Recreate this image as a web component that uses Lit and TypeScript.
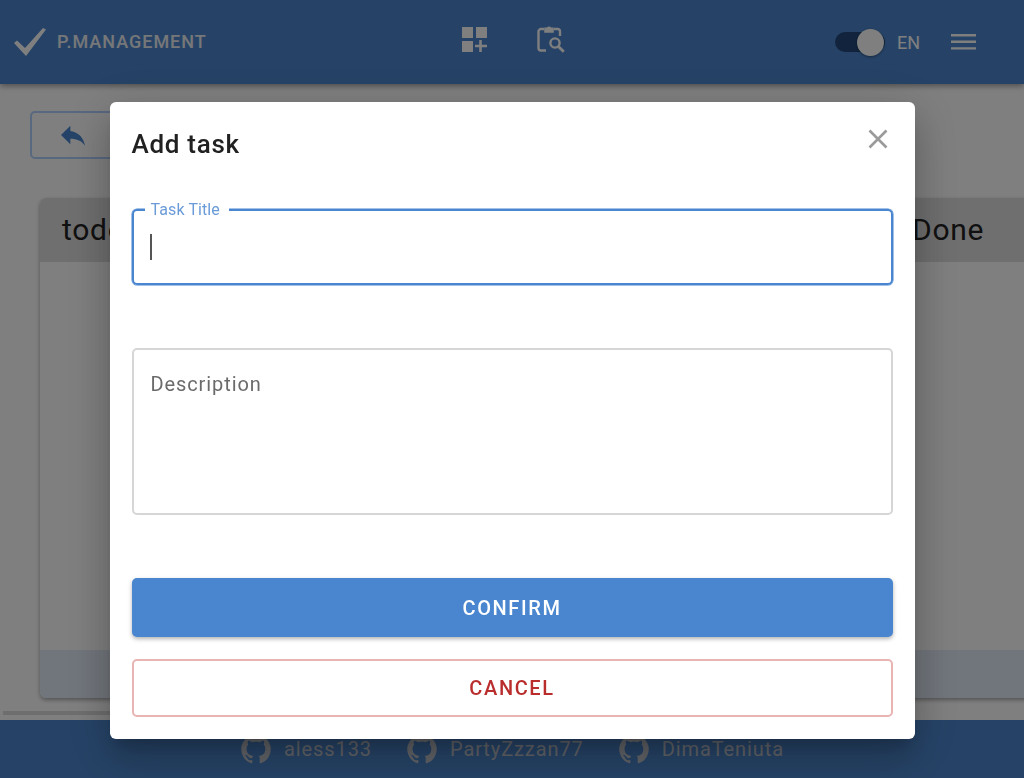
import { LitElement, html, css } from 'lit';
import { customElement } from 'lit/decorators.js';

const githubPath =
  'M12 1.27a11 11 0 00-3.48 21.46c.55.09.73-.28.73-.55v-1.84c-3.03.64-3.67-1.46-3.67-1.46-.55-1.29-1.28-1.65-1.28-1.65-.92-.65.1-.65.1-.65 1.1 0 1.73 1.1 1.73 1.1.92 1.65 2.57 1.2 3.21.92a2 2 0 01.64-1.47c-2.47-.27-5.04-1.19-5.04-5.5 0-1.1.46-2.1 1.2-2.84a3.76 3.76 0 010-2.93s.91-.28 3.11 1.1c1.8-.49 3.7-.49 5.5 0 2.1-1.38 3.02-1.1 3.02-1.1a3.76 3.76 0 010 2.93c.83.74 1.2 1.74 1.2 2.94 0 4.21-2.57 5.13-5.04 5.4.45.37.82.92.82 2.02v3.03c0 .27.1.64.73.55A11 11 0 0012 1.27';

const authors = ['aless133', 'PartyZzzan77', 'DimaTeniuta'];

@customElement('app-root')
export class AppRoot extends LitElement {
  static styles = css`
    :host {
      display: block;
      height: 778px;
      overflow: hidden;
      font-family: Roboto, 'Liberation Sans', sans-serif;
    }

    * {
      box-sizing: border-box;
    }

    .page {
      display: flex;
      flex-direction: column;
      height: 778px;
      background: #fff;
    }

    /* Header */
    .header {
      flex: none;
      display: grid;
      grid-template-columns: 1fr auto 1fr;
      align-items: center;
      height: 84px;
      padding: 0 14px;
      background: #4c87cf;
      color: #fff;
      box-shadow: 0 2px 6px rgba(0, 0, 0, 0.4);
      position: relative;
    }

    .logo {
      display: flex;
      align-items: center;
      gap: 11px;
      color: #eceef2;
      font-size: 18px;
      font-weight: 500;
      letter-spacing: 1px;
    }

    .logo span {
      padding-bottom: 2px;
    }

    .nav {
      display: flex;
      align-items: center;
      gap: 50px;
      margin: -6px 0 0 2px;
    }

    .nav svg {
      display: block;
    }

    .controls {
      display: flex;
      justify-content: flex-end;
      align-items: center;
      padding-right: 34px;
      font-size: 18px;
      font-weight: 400;
    }

    .switch {
      display: flex;
      align-items: center;
      width: 50px;
      height: 20px;
      margin-right: 12px;
      padding-left: 22px;
      border-radius: 10px;
      background: #24497a;
    }

    .thumb {
      flex: none;
      width: 27px;
      height: 27px;
      border-radius: 50%;
      background: #fff;
      box-shadow: 0 1px 3px rgba(0, 0, 0, 0.4);
    }

    .menu {
      display: block;
      margin-left: 31px;
    }

    /* Board */
    .main {
      flex: 1;
      min-height: 0;
      overflow: hidden;
      padding: 27px 0 0;
    }

    .back {
      display: flex;
      align-items: center;
      justify-content: center;
      width: 85px;
      height: 48px;
      margin-left: 30px;
      border: 2px solid #b0d0ff;
      border-radius: 5px;
      background: transparent;
    }

    .board {
      display: flex;
      gap: 450px;
      height: 500px;
      margin: 39px 0 0 40px;
    }

    .column {
      flex: none;
      display: flex;
      flex-direction: column;
      width: 400px;
      border-radius: 6px;
      background: #fff;
      box-shadow: 0 2px 4px rgba(0, 0, 0, 0.35);
      overflow: hidden;
    }

    .column-title {
      flex: none;
      height: 64px;
      padding: 0 22px;
      background: #dedede;
      color: #222;
      font-size: 30px;
      letter-spacing: 0.7px;
      line-height: 64px;
    }

    .column-body {
      flex: 1;
    }

    .column-foot {
      flex: none;
      height: 48px;
      background: #e3ecf8;
    }

    .scrollbar {
      width: 600px;
      height: 4px;
      margin: 13px 0 0 3px;
      background: #dcdcdc;
    }

    /* Footer */
    .footer {
      flex: none;
      display: flex;
      justify-content: center;
      align-items: center;
      gap: 34px;
      height: 58px;
      background: #4c87cf;
      color: #c4c8d0;
      font-size: 20px;
      letter-spacing: 0.9px;
    }

    .author {
      display: flex;
      align-items: center;
      gap: 12px;
    }

    .author svg {
      display: block;
      fill: currentColor;
    }

    /* Dialog */
    .backdrop {
      position: fixed;
      inset: 0;
      display: flex;
      justify-content: center;
      align-items: flex-start;
      padding-top: 102px;
      background: rgba(0, 0, 0, 0.5);
    }

    .dialog {
      display: flex;
      flex-direction: column;
      width: 805px;
      height: 637px;
      padding: 0 22px;
      border-radius: 6px;
      background: #fff;
      box-shadow: 0 11px 15px -7px rgba(0, 0, 0, 0.2), 0 24px 38px 3px rgba(0, 0, 0, 0.14),
        0 9px 46px 8px rgba(0, 0, 0, 0.12);
    }

    .dialog-head {
      flex: none;
      display: flex;
      justify-content: space-between;
      align-items: center;
      height: 84px;
      padding-right: 5px;
    }

    .dialog-head h2 {
      margin: 0;
      color: #212121;
      font-size: 26px;
      font-weight: 500;
      letter-spacing: 0.7px;
      line-height: 84px;
    }

    .close {
      display: block;
      margin-top: -10px;
      padding: 0;
      border: none;
      background: none;
    }

    .close svg {
      display: block;
    }

    .field {
      position: relative;
      flex: none;
      display: flex;
      border: 2px solid #d6d6d6;
      border-radius: 5px;
    }

    .field.title {
      height: 76px;
      margin: 23px 0 63px;
      border-color: #4a86cf;
      box-shadow: 0 0 0 0.5px #4a86cf;
    }

    .field.description {
      height: 167px;
    }

    .field label {
      position: absolute;
      top: -10px;
      left: 11px;
      padding: 0 9px 0 6px;
      background: #fff;
      color: #6a9bd8;
      font-size: 16px;
      letter-spacing: 0.1px;
      line-height: 18px;
    }

    .caret {
      position: absolute;
      top: 23px;
      left: 16px;
      width: 2px;
      height: 26px;
      background: #555;
    }

    input,
    textarea {
      flex: 1;
      min-width: 0;
      padding: 20px 17px;
      border: none;
      outline: none;
      background: none;
      color: #212121;
      font: 400 20px/28px Roboto, sans-serif;
      resize: none;
    }

    textarea::placeholder {
      color: #6b6b6b;
      opacity: 1;
      letter-spacing: 0.9px;
    }

    .actions {
      display: flex;
      flex-direction: column;
      gap: 22px;
      margin-top: 63px;
    }

    .btn {
      display: block;
      width: 100%;
      height: 59px;
      border-radius: 5px;
      font: 500 20px Roboto, sans-serif;
      letter-spacing: 1.6px;
    }

    .confirm {
      border: none;
      background: #4a86cf;
      color: #fff;
      box-shadow: 0 2px 4px rgba(0, 0, 0, 0.3);
    }

    .cancel {
      height: 58px;
      border: 2px solid #e8b4b4;
      background: #fff;
      color: #b92d2d;
    }
  `;

  render() {
    return html`
      <div class="page">
        <header class="header">
          <div class="logo">
            <svg width="32" height="28" viewBox="0 0 32 28" fill="#fff">
              <path d="M0 15 3 12.5 11 20 29 0 32 1.5 12 28Z" />
            </svg>
            <span>P.MANAGEMENT</span>
          </div>
          <nav class="nav">
            <svg width="25" height="25" viewBox="0 0 25 25" fill="#fff">
              <path d="M0 0h11v11H0zM14 0h11v11H14zM0 14h11v11H0zM17.2 13h2.6v4.7H25v2.6h-5.2V25h-2.6v-4.7H13v-2.6h4.2z" />
            </svg>
            <svg width="28" height="28" viewBox="0 0 28 28" fill="none" stroke="#fff" stroke-width="2.4">
              <path d="M9 25.5H4A2.5 2.5 0 0 1 1.5 23V6.5A2.5 2.5 0 0 1 4 4h3M17 4h3.5A2.5 2.5 0 0 1 23 6.5V11" />
              <path d="M8 7V3.2h2.4a2 2 0 0 1 3.2 0H16V7z" fill="#fff" stroke-width="1.6" />
              <circle cx="18" cy="18" r="4.6" />
              <path d="M21.4 21.4 26.8 26.8" stroke-width="2.8" />
            </svg>
          </nav>
          <div class="controls">
            <span class="switch"><span class="thumb"></span></span>
            EN
            <svg class="menu" width="25" height="16" viewBox="0 0 25 16" fill="#fff">
              <path d="M0 0h25v2.4H0zM0 6.6h25V9H0zM0 13.2h25v2.4H0z" />
            </svg>
          </div>
        </header>

        <main class="main">
          <button class="back" aria-label="Back">
            <svg width="32" height="32" viewBox="0 0 24 24" fill="#4b87d0">
              <path d="M10 9V5l-7 7 7 7v-4.1c5 0 8.5 1.6 11 5.1-1-5-4-10-11-11z" />
            </svg>
          </button>
          <div class="board">
            ${['todo', 'Done'].map(
              (name) => html`
                <section class="column">
                  <div class="column-title">${name}</div>
                  <div class="column-body"></div>
                  <div class="column-foot"></div>
                </section>
              `
            )}
          </div>
          <div class="scrollbar"></div>
        </main>

        <footer class="footer">
          ${authors.map(
            (name) => html`
              <span class="author">
                <svg width="32" height="32" viewBox="0 0 24 24"><path d=${githubPath} /></svg>
                ${name}
              </span>
            `
          )}
        </footer>
      </div>

      <div class="backdrop">
        <div class="dialog">
          <div class="dialog-head">
            <h2>Add task</h2>
            <button class="close" aria-label="Close">
              <svg width="20" height="20" viewBox="0 0 20 20" stroke="#9a9a9a" stroke-width="2.6">
                <path d="M1.5 1.5 18.5 18.5M18.5 1.5 1.5 18.5" />
              </svg>
            </button>
          </div>
          <div class="field title">
            <label>Task Title</label>
            <input type="text" />
            <span class="caret"></span>
          </div>
          <div class="field description">
            <textarea placeholder="Description"></textarea>
          </div>
          <div class="actions">
            <button class="btn confirm">CONFIRM</button>
            <button class="btn cancel">CANCEL</button>
          </div>
        </div>
      </div>
    `;
  }
}
